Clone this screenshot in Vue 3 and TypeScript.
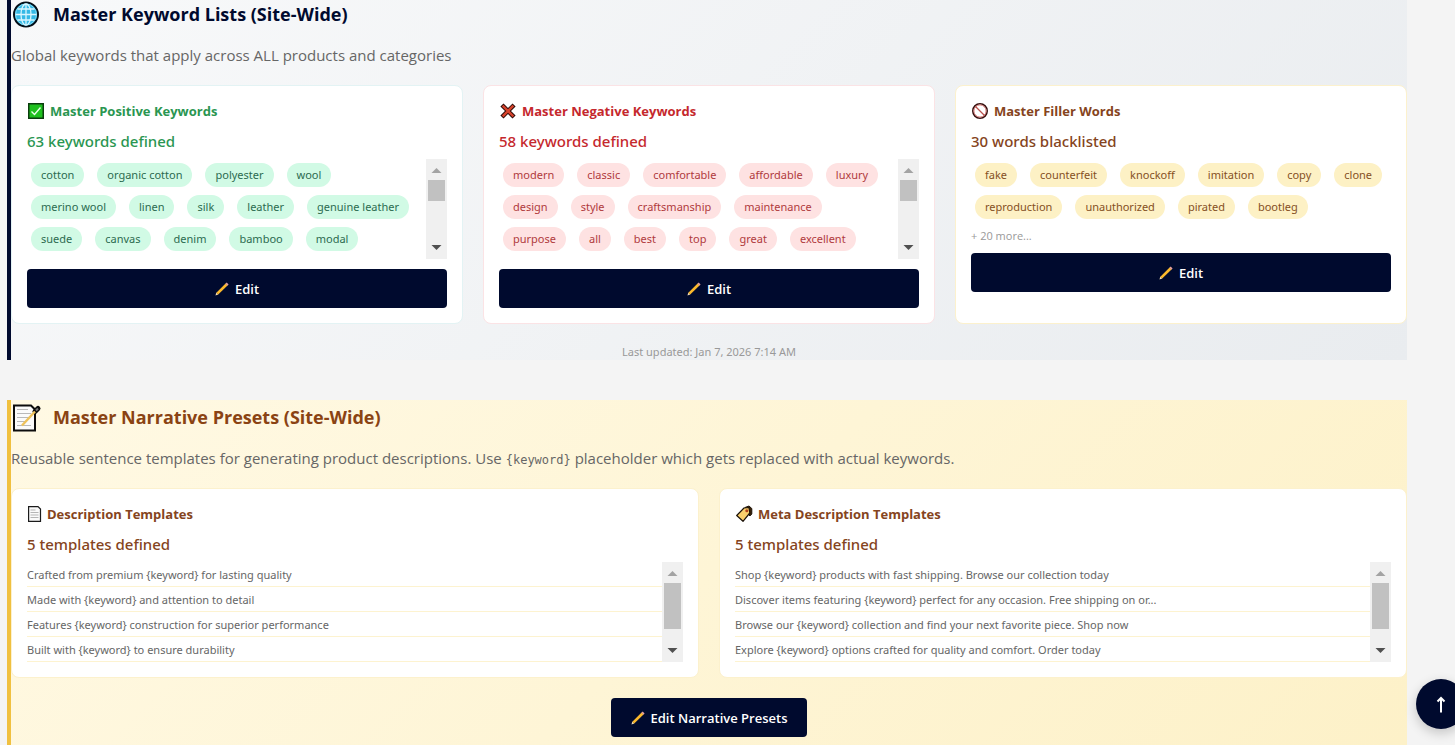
<script setup lang="ts">
import { ref } from 'vue'

type Tone = 'positive' | 'negative' | 'filler'

interface KeywordCard {
  tone: Tone
  title: string
  count: string
  words: string[]
  thumb?: number
  more?: string
}

interface TemplateCard {
  icon: 'page' | 'tag'
  title: string
  count: string
  templates: string[]
  thumb: number
}

const keywordCards = ref<KeywordCard[]>([
  {
    tone: 'positive',
    title: 'Master Positive Keywords',
    count: '63 keywords defined',
    words: ['cotton', 'organic cotton', 'polyester', 'wool', 'merino wool', 'linen', 'silk', 'leather', 'genuine leather', 'suede', 'canvas', 'denim', 'bamboo', 'modal'],
    thumb: 36,
  },
  {
    tone: 'negative',
    title: 'Master Negative Keywords',
    count: '58 keywords defined',
    words: ['modern', 'classic', 'comfortable', 'affordable', 'luxury', 'design', 'style', 'craftsmanship', 'maintenance', 'purpose', 'all', 'best', 'top', 'great', 'excellent'],
    thumb: 36,
  },
  {
    tone: 'filler',
    title: 'Master Filler Words',
    count: '30 words blacklisted',
    words: ['fake', 'counterfeit', 'knockoff', 'imitation', 'copy', 'clone', 'reproduction', 'unauthorized', 'pirated', 'bootleg'],
    more: '+ 20 more...',
  },
])

const templateCards = ref<TemplateCard[]>([
  {
    icon: 'page',
    title: 'Description Templates',
    count: '5 templates defined',
    templates: [
      'Crafted from premium {keyword} for lasting quality',
      'Made with {keyword} and attention to detail',
      'Features {keyword} construction for superior performance',
      'Built with {keyword} to ensure durability',
    ],
    thumb: 80,
  },
  {
    icon: 'tag',
    title: 'Meta Description Templates',
    count: '5 templates defined',
    templates: [
      'Shop {keyword} products with fast shipping. Browse our collection today',
      'Discover items featuring {keyword} perfect for any occasion. Free shipping on or...',
      'Browse our {keyword} collection and find your next favorite piece. Shop now',
      'Explore {keyword} options crafted for quality and comfort. Order today',
    ],
    thumb: 80,
  },
])

const placeholder = '{keyword}'

function scrollToTop(): void {
  window.scrollTo({ top: 0, behavior: 'smooth' })
}
</script>

<template>
  <main class="page">
    <section class="panel panel-keywords">
      <header class="panel-head">
        <svg class="panel-icon" viewBox="0 0 32 32" aria-hidden="true">
          <circle cx="15" cy="15.500" r="12" fill="#35b9e6" stroke="#061019" stroke-width="2" />
          <g fill="none" stroke="#d9f6ff" stroke-width="1.300">
            <circle cx="15" cy="15.500" r="10.500" stroke="#7fdcf7" stroke-width="1" />
            <ellipse cx="15" cy="15.500" rx="5" ry="10.500" />
            <path d="M15 5v21M4.500 15.500h21M6.500 10h17M6.500 21h17" />
          </g>
        </svg>
        <h2>Master Keyword Lists (Site-Wide)</h2>
      </header>
      <p class="intro">Global keywords that apply across ALL products and categories</p>

      <div class="cards cards-three">
        <article v-for="card in keywordCards" :key="card.tone" class="card" :class="card.tone">
          <h3>
            <svg v-if="card.tone === 'positive'" class="mark" viewBox="0 0 18 18" aria-hidden="true">
              <rect x="1.750" y="1.750" width="14.500" height="14.500" fill="#1fc01f" stroke="#0b3d0e" stroke-width="1.500" />
              <path d="M4.500 9.500l3 3 6-7" fill="none" stroke="#e9ffe9" stroke-width="1.400" />
            </svg>
            <svg v-else-if="card.tone === 'negative'" class="mark" viewBox="0 0 18 18" aria-hidden="true">
              <path d="M4.500 4.500l9 9M13.500 4.500l-9 9" stroke="#2c0b08" stroke-width="4.400" stroke-linecap="square" />
              <path d="M4.500 4.500l9 9M13.500 4.500l-9 9" stroke="#d8432c" stroke-width="2.400" stroke-linecap="square" />
            </svg>
            <svg v-else class="mark" viewBox="0 0 18 18" aria-hidden="true">
              <circle cx="9" cy="9" r="7.200" fill="#fff" stroke="#35100f" stroke-width="1.600" />
              <circle cx="9" cy="9" r="6.100" fill="none" stroke="#d97a78" stroke-width="1" />
              <path d="M4.500 4.500l9 9" stroke="#b8504c" stroke-width="1.300" />
            </svg>
            <span>{{ card.title }}</span>
          </h3>
          <p class="count">{{ card.count }}</p>
          <div class="viewport" :class="{ scrolling: card.thumb }">
            <ul class="chips">
              <li v-for="word in card.words" :key="word">{{ word }}</li>
            </ul>
            <div v-if="card.thumb" class="bar" aria-hidden="true">
              <svg viewBox="0 0 21 21"><path d="M5.500 14h10l-5-5z" fill="#a3a3a3" /></svg>
              <div class="track"><div class="thumb" :style="{ height: card.thumb + '%' }"></div></div>
              <svg viewBox="0 0 21 21"><path d="M5.500 7h10l-5 5z" fill="#505050" /></svg>
            </div>
          </div>
          <p v-if="card.more" class="more">{{ card.more }}</p>
          <button type="button" class="button wide">
            <svg class="pencil" viewBox="0 0 14 14" aria-hidden="true">
              <path d="M.5 13.500l.8-2.900 2 2z" fill="#f6dfb5" />
              <path d="M1.300 10.700L10.600 1.600l1.900 1.900-9.300 9.100z" fill="#fbb92c" />
              <path d="M10.400 1.800l1.300-1.300 1.900 1.900-1.300 1.300z" fill="#e9a3a0" />
            </svg>
            Edit
          </button>
        </article>
      </div>
      <p class="updated">Last updated: Jan 7, 2026 7:14 AM</p>
    </section>

    <section class="panel panel-presets">
      <header class="panel-head">
        <svg class="panel-icon" viewBox="0 0 32 32" aria-hidden="true">
          <path d="M3 3.500h17l4 4v21H3z" fill="#fbfbfb" stroke="#0d0d0d" stroke-width="2" />
          <path d="M6 7.500h11M6 11.500h14M6 15.500h13M6 19.500h9M6 23.500h14" stroke="#b9b9b9" stroke-width="1.200" />
          <path d="M24 9.500l3-3" stroke="#0d0d0d" stroke-width="5" stroke-linecap="round" />
          <path d="M11 23.500L24 9.500" stroke="#eec25a" stroke-width="2.400" />
          <path d="M25 8.500l2-2" stroke="#777" stroke-width="2" />
        </svg>
        <h2>Master Narrative Presets (Site-Wide)</h2>
      </header>
      <p class="intro">
        Reusable sentence templates for generating product descriptions. Use
        <code>{{ placeholder }}</code> placeholder which gets replaced with actual keywords.
      </p>

      <div class="cards cards-two">
        <article v-for="card in templateCards" :key="card.title" class="card filler">
          <h3>
            <svg v-if="card.icon === 'page'" class="mark narrow" viewBox="0 0 15 18" aria-hidden="true">
              <path d="M1.600 1.600h9.400l2.500 2.500v12.300H1.600z" fill="#fafafa" stroke="#1b1b1b" stroke-width="1.200" />
              <path d="M3.500 5h5M3.500 7.500h8M3.500 10h8M3.500 12.500h8" stroke="#b5b5b5" stroke-width="1" />
            </svg>
            <svg v-else class="mark" viewBox="0 0 18 18" aria-hidden="true">
              <path d="M10 2.500l4-1.500 2.800 2.500v5.500l-2 2z" fill="#3a2208" stroke="#1c1208" stroke-width="1" />
              <path d="M1.700 10.500L9 3l5-.5.800 5.500-6.800 8.300z" fill="#f9cf6c" stroke="#1c1208" stroke-width="1.200" stroke-linejoin="round" />
              <circle cx="11.800" cy="5.700" r="1.500" fill="#b4421c" />
            </svg>
            <span>{{ card.title }}</span>
          </h3>
          <p class="count">{{ card.count }}</p>
          <div class="viewport scrolling">
            <ul class="templates">
              <li v-for="line in card.templates" :key="line">{{ line }}</li>
            </ul>
            <div class="bar" aria-hidden="true">
              <svg viewBox="0 0 21 21"><path d="M5.500 14h10l-5-5z" fill="#a3a3a3" /></svg>
              <div class="track"><div class="thumb" :style="{ height: card.thumb + '%' }"></div></div>
              <svg viewBox="0 0 21 21"><path d="M5.500 7h10l-5 5z" fill="#505050" /></svg>
            </div>
          </div>
        </article>
      </div>

      <div class="actions">
        <button type="button" class="button">
          <svg class="pencil" viewBox="0 0 14 14" aria-hidden="true">
            <path d="M.5 13.500l.8-2.900 2 2z" fill="#f6dfb5" />
            <path d="M1.300 10.700L10.600 1.600l1.900 1.900-9.300 9.100z" fill="#fbb92c" />
            <path d="M10.400 1.800l1.300-1.300 1.900 1.900-1.300 1.300z" fill="#e9a3a0" />
          </svg>
          Edit Narrative Presets
        </button>
      </div>
    </section>

    <button type="button" class="to-top" aria-label="Back to top" @click="scrollToTop">
      <svg viewBox="0 0 20 20" aria-hidden="true">
        <path d="M10 18.500V4M6.500 7.500L10 4l3.500 3.500" fill="none" stroke="#fff" stroke-width="2" />
      </svg>
    </button>
  </main>
</template>

<style>
body {
  margin: 0;
  background: #f4f4f4;
}
</style>

<style scoped>
.page {
  display: flex;
  flex-direction: column;
  gap: 40px;
  margin-top: -3px;
  padding: 0 48px 0 7px;
  font-family: "Open Sans", "Noto Sans", sans-serif;
  color: #666;
}

h2,
h3,
p,
ul {
  margin: 0;
  padding: 0;
}

ul {
  list-style: none;
}

.panel {
  border-left: 4px solid #000a2e;
}

.panel-keywords {
  background: linear-gradient(135deg, #f8f9fa 0%, #e9ecef 100%);
}

.panel-presets {
  padding-bottom: 8px;
  border-left-color: #f0c040;
  background: linear-gradient(135deg, #fff9e4 0%, #fdf1c8 100%);
}

.panel-head {
  display: flex;
  align-items: center;
  gap: 10px;
  height: 36px;
}

.panel-icon {
  width: 32px;
  height: 32px;
}

h2 {
  padding-bottom: 2px;
  font-size: 18px;
  line-height: 28px;
  font-weight: 700;
  color: #000a2e;
}

.panel-presets h2 {
  color: #8a4313;
}

.intro {
  margin: 10px 0 18px;
  font-size: 15px;
  line-height: 24px;
}

.intro code {
  font-family: "DejaVu Sans Mono", monospace;
  font-size: 12px;
  line-height: 12px;
}

.cards {
  display: grid;
  gap: 20px;
}

.cards-three {
  grid-template-columns: repeat(3, minmax(0, 1fr));
}

.cards-two {
  grid-template-columns: repeat(2, minmax(0, 1fr));
}

.card {
  padding: 15px;
  border: 1px solid;
  border-radius: 8px;
  background: #fff;
}

.positive {
  border-color: #e3f3f4;
}

.negative {
  border-color: #fbe3e5;
}

.filler {
  border-color: #fcf1cd;
}

h3 {
  display: flex;
  align-items: center;
  gap: 5px;
  margin-bottom: 10px;
  font-size: 13px;
  line-height: 20px;
  font-weight: 700;
}

.mark {
  width: 18px;
  height: 18px;
}

.mark.narrow {
  width: 15px;
}

.count {
  margin-bottom: 8px;
  font-family: "Noto Sans", "Open Sans", sans-serif;
  font-size: 15px;
  line-height: 20px;
  font-weight: 500;
}

.positive h3,
.positive .count {
  color: #2a9651;
}

.negative h3,
.negative .count {
  color: #c5282d;
}

.filler h3,
.filler .count {
  color: #854420;
}

.viewport {
  display: flex;
}

.scrolling {
  height: 100px;
  overflow: hidden;
}

.chips {
  display: flex;
  flex: 1;
  flex-wrap: wrap;
  align-content: flex-start;
  gap: 8px 13px;
  padding: 4px;
}

.scrolling .chips {
  padding-right: 12px;
}

.chips li {
  padding: 0 10px;
  border-radius: 12px;
  font-family: "Noto Sans", "Open Sans", sans-serif;
  font-size: 11px;
  line-height: 24px;
}

.positive .chips li {
  background: #d1fae5;
  color: #2c6b50;
}

.negative .chips li {
  background: #fee2e2;
  color: #b03a3d;
}

.filler .chips li {
  background: #fdf1c5;
  color: #85501f;
}

.templates {
  flex: 1;
}

.templates li {
  padding-top: 2px;
  border-bottom: 1px solid #fdf3d0;
  font-family: "Noto Sans", "Open Sans", sans-serif;
  font-size: 11px;
  line-height: 22px;
}

.bar {
  display: flex;
  flex: none;
  flex-direction: column;
  width: 21px;
  background: #f0f0f0;
}

.bar svg {
  display: block;
  width: 21px;
  height: 21px;
}

.track {
  flex: 1;
  padding: 0 2px;
}

.thumb {
  background: #c1c1c1;
}

.more {
  padding-top: 5px;
  font-size: 11px;
  line-height: 15px;
  color: #999;
}

.button {
  display: inline-flex;
  align-items: center;
  justify-content: center;
  gap: 6px;
  height: 39px;
  padding: 0 20px;
  border: 0;
  border-radius: 4px;
  background: #000a2e;
  font-family: inherit;
  font-size: 13px;
  font-weight: 600;
  color: #fff;
  cursor: pointer;
}

.wide {
  width: 100%;
  margin-top: 10px;
}

.pencil {
  width: 14px;
  height: 14px;
}

.updated {
  padding-top: 20px;
  font-family: "Noto Sans", "Open Sans", sans-serif;
  font-size: 11px;
  line-height: 16px;
  text-align: center;
  color: #999;
}

.actions {
  display: flex;
  justify-content: center;
  padding-top: 20px;
}

.to-top {
  position: fixed;
  right: -11px;
  bottom: 16px;
  display: flex;
  align-items: center;
  justify-content: center;
  width: 50px;
  height: 50px;
  padding: 0;
  border: 0;
  border-radius: 50%;
  background: #000a2e;
  box-shadow: 0 4px 12px rgba(0, 0, 0, 0.2);
  cursor: pointer;
}

.to-top svg {
  width: 20px;
  height: 20px;
}
</style>
